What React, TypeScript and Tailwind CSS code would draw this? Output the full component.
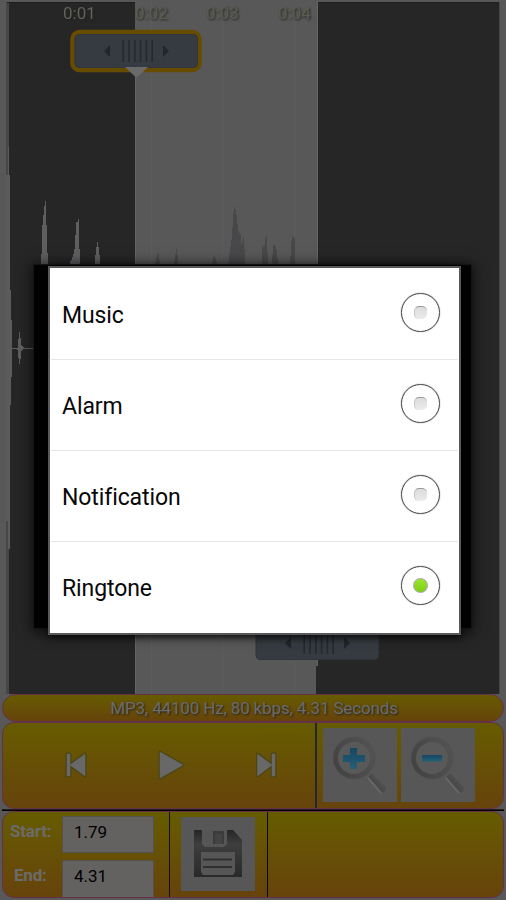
import { useState } from "react";

const KINDS = ["Music", "Alarm", "Notification", "Ringtone"];

const TICKS = [
  { x: 63, label: "0:01" },
  { x: 135, label: "0:02" },
  { x: 206, label: "0:03" },
  { x: 278, label: "0:04" },
];

function Grip({ x, y, active }: { x: number; y: number; active?: boolean }) {
  return (
    <g transform={`translate(${x} ${y})`}>
      {active ? <rect x="-2.500" y="-2" width="127" height="38" rx="7" fill="none" stroke="#674c00" strokeWidth="4.500" /> : null}
      <rect x="0" y="0.5" width="122.500" height="33" rx="4" fill="#353b40" stroke="#2f363a" />
      <path d="M35 11v12l-6-6zM88 11v12l6-6z" fill="#20262a" />
      <path d="M48.2 6v22M54 6v22M59.8 6v22M65.6 6v22M71.4 6v22M77.2 6v22" stroke="#23292d" strokeWidth="1.5" />
    </g>
  );
}

function Waveform() {
  return (
    <svg width="506" height="694" viewBox="0 0 506 694" className="block shrink-0">
      <g shapeRendering="crispEdges">
        <rect width="506" height="694" fill="#585858" />
        <rect x="6" y="2" width="494" height="692" fill="#474747" />
        <rect x="9" y="2" width="490" height="692" fill="#262626" />
        <path d="M7 2h492" stroke="#1e1e1e" />
        <rect x="135" y="0" width="182" height="694" fill="#585858" />
        <path d="M135.5 70v624M317.5 2v664" stroke="#646464" />
        <path d="M151.5 2v692M222.5 2v692M294.5 2v692" stroke="#5c5c5c" />
        <rect x="316" y="666" width="2" height="28" fill="#262626" />
        <path d="M6 175h2v-28h1v28h1v115h1v30h1v57h-1v28h-1v144h-2v-28h-2z" fill="#5b5b5c" />
        <path
          d="M41 264v-10h1v-29h1v-10h1v-9h1v-5h1v24h1v28h1v11zM70 264v-2l2-3 2-6 1-8v-10h1v-13h2v-3h1v30h1v18h2v12zM95 264v-9h1v-8h1v-5h1v5h1v8h1v9zM18 348v-9h1v-7h1v6h1v7l3 3-3 3v8h-1v5h-1v-6h-1v-7l-1-2zM11 348h23v1H11z"
          fill="#5e5e60"
        />
        <path
          d="M155 264l2-9 1-3 1 4 1 8zM174 264l1-8 1.500-7 1 6 1 9zM212 264l2-9 1 2 2 7zM228 264l2-13 2-15 1-16 1-13h1l1 5 1 5 1 13 2 4h1v10h1v2l1-9h1v12h1v15zM262 264v-20l2 4 2-12h1v17h1v11zM272 264l1-19h2l2 6 1 13zM290 264l2-31 1 5h1.500v26z"
          fill="#48484a"
        />
      </g>
      <Grip x={75} y={34} active />
      <path d="M125 67h23l-11.500 11z" fill="#6a6a6a" />
      <Grip x={256} y={626} />
      {TICKS.map((t) => (
        <text
          key={t.label}
          x={t.x}
          y="19"
          fontSize="17"
          fill={t.x < 100 ? "#626258" : "#5d5d4e"}
          className="font-['Roboto',sans-serif] drop-shadow-[1px_1px_1px_#222222]"
        >
          {t.label}
        </text>
      ))}
    </svg>
  );
}

function Magnifier({ plus }: { plus?: boolean }) {
  const id = plus ? "lens-in" : "lens-out";
  return (
    <svg width="74" height="74" viewBox="0 0 74 74" className="block bg-[#575757]">
      <defs>
        <linearGradient id={id} x1="0" y1="0.700" x2="1" y2="0.300">
          <stop offset="0" stopColor="#434343" />
          <stop offset="1" stopColor="#525252" />
        </linearGradient>
        <linearGradient id={`${id}-bar`} x1="0" y1="0" x2="0" y2="1">
          <stop offset="0" stopColor="#164762" />
          <stop offset="0.500" stopColor="#1d526d" />
          <stop offset="1" stopColor="#286079" />
        </linearGradient>
        <linearGradient id={`${id}-handle`} gradientUnits="userSpaceOnUse" x1="49" y1="59" x2="57" y2="52">
          <stop offset="0" stopColor="#3f3f3f" />
          <stop offset="0.250" stopColor="#6c6c6c" />
          <stop offset="0.450" stopColor="#484848" />
          <stop offset="1" stopColor="#525252" />
        </linearGradient>
      </defs>
      <path d="M43 51l6-6 13 13c3 3-1 8-5 7z" fill={`url(#${id}-handle)`} />
      <circle cx="31" cy="30" r="18.500" fill="#595959" stroke={`url(#${id})`} strokeWidth="5" />
      <circle cx="31" cy="30" r="21" fill="none" stroke="#505050" />
      {plus ? (
        <path d="M27 20h7v7h8v7h-8v7h-7v-7h-7v-7h7z" fill={`url(#${id}-bar)`} />
      ) : (
        <path d="M21 27h20v6.500H21z" fill={`url(#${id}-bar)`} />
      )}
    </svg>
  );
}

function Floppy() {
  return (
    <svg width="74" height="74" viewBox="0 0 74 74" className="block bg-[#575757]">
      <defs>
        <linearGradient id="disk" x1="0" y1="0" x2="0" y2="1">
          <stop offset="0" stopColor="#262626" />
          <stop offset="0.300" stopColor="#3e3e3e" />
          <stop offset="1" stopColor="#292929" />
        </linearGradient>
      </defs>
      <path d="M13 13h39l9 10v37H13z" fill="url(#disk)" />
      <path d="M21 13h25v14l-3 3H24l-3-3z" fill="#565656" />
      <path d="M32 14h11v13H32z" fill="#3b3b3b" />
      <path d="M34 17h7v10h-7z" fill="#444444" />
      <path d="M20 35h34v20l-2 3H22l-2-3z" fill="#565656" />
      <path d="M22 42.500h29M22 50h29" stroke="#303030" strokeWidth="2" />
    </svg>
  );
}

function Player() {
  const shapes = "M67 754h3v22h-3zM85 754v22l-15-11zM160 752l23 13-23 13zM257.500 754v22l14.500-11zM272 754h3v22h-3z";
  return (
    <svg width="314" height="84" viewBox="3 723 314 84" className="block">
      <path d={shapes} fill="none" stroke="#4b4514" strokeWidth="3" strokeLinejoin="round" />
      <path d={shapes} fill="#686868" stroke="#686868" strokeWidth="0.500" />
    </svg>
  );
}

function Radio({ checked }: { checked: boolean }) {
  return (
    <span className="mb-[3px] flex size-[39px] shrink-0 items-center justify-center rounded-full border-[1.5px] border-[#48484a] shadow-[0_0_1px_#48484a]">
      {checked ? (
        <span className="size-[15px] rounded-full border border-[#aaa0b8] bg-linear-to-b from-[#99e52c] to-[#7fce13]" />
      ) : (
        <span className="size-[13px] rounded-[5px] border-t border-l border-t-[#999999] border-l-[#c4c4c4] bg-linear-to-b from-[#dcdcdc] to-[#ececec]" />
      )}
    </span>
  );
}

export default function App() {
  const [kind, setKind] = useState("Ringtone");

  return (
    <div className="relative flex h-[900px] w-[506px] flex-col overflow-hidden bg-[#585858] font-['Roboto',sans-serif]">
      <Waveform />

      <div className="mx-[2px] flex h-[28px] shrink-0 items-center justify-center rounded-[14px] border border-[#66304a] bg-linear-to-b from-[#665c00] to-[#66430b] pt-px pl-[2px] text-[17px] tracking-[-0.15px] text-[#6b6b6b] [text-shadow:1px_1px_2px_#222222]">
        MP3, 44100 Hz, 80 kbps, 4.31 Seconds
      </div>

      <div className="mx-[2px] flex h-[87px] shrink-0 rounded-[12px] border border-[#66304a] bg-linear-to-b from-[#665c00] to-[#66430b]">
        <Player />
        <div className="-ml-[2px] w-[2px] bg-[#232730]" />
        <div className="flex gap-[4px] pt-[5px] pl-[6px]">
          <Magnifier plus />
          <Magnifier />
        </div>
      </div>
      <div className="mx-[2px] h-[2px] shrink-0 border-b border-black bg-[#2a1d1c]" />

      <div className="mx-[2px] flex h-[87px] shrink-0 rounded-[12px] border border-[#66304a] bg-linear-to-b from-[#665c00] to-[#66430b] text-[17px]">
        <div className="flex w-[59px] shrink-0 flex-col gap-[20px] pt-[7px] pl-[7px] font-bold tracking-[-0.2px] text-[#6b6b6b]">
          <span className="leading-[24px]">Start:</span>
          <span className="pl-[4px] leading-[24px]">End:</span>
        </div>
        <div className="flex w-[92px] shrink-0 flex-col gap-[7px] pt-[4px] text-black">
          <span className="h-[37px] border border-[#55524c] bg-[#646260] pl-[11px] leading-[31px]">1.79</span>
          <span className="h-[37px] border border-b-0 border-[#55524c] bg-[#646260] pl-[11px] leading-[31px]">4.31</span>
        </div>
        <div className="ml-[15px] w-px bg-[#111111]" />
        <div className="w-[97px] pt-[5px] pl-[11px]">
          <Floppy />
        </div>
        <div className="w-px bg-[#080808]" />
      </div>

      <div className="absolute top-[264px] left-[33px] h-[365px] w-[439px] border border-[#151515] bg-[#020202] shadow-[0_2px_12px_2px_rgba(0,0,0,0.6)]" />
      <div className="absolute top-[266px] left-[48px] w-[413px] border-2 border-[#59595b] bg-white pt-px shadow-[0_2px_8px_rgba(0,0,0,0.8)]">
        {KINDS.map((k) => (
          <button
            key={k}
            onClick={() => setKind(k)}
            className="mx-px flex h-[91px] w-[407px] items-center justify-between border-b border-[#e6e6e6] pr-[18px] pl-[11px] text-[23px] tracking-[-0.1px] text-[#080808] last:border-b-transparent"
          >
            <span className="pt-[5px]">{k}</span>
            <Radio checked={k === kind} />
          </button>
        ))}
      </div>
    </div>
  );
}
